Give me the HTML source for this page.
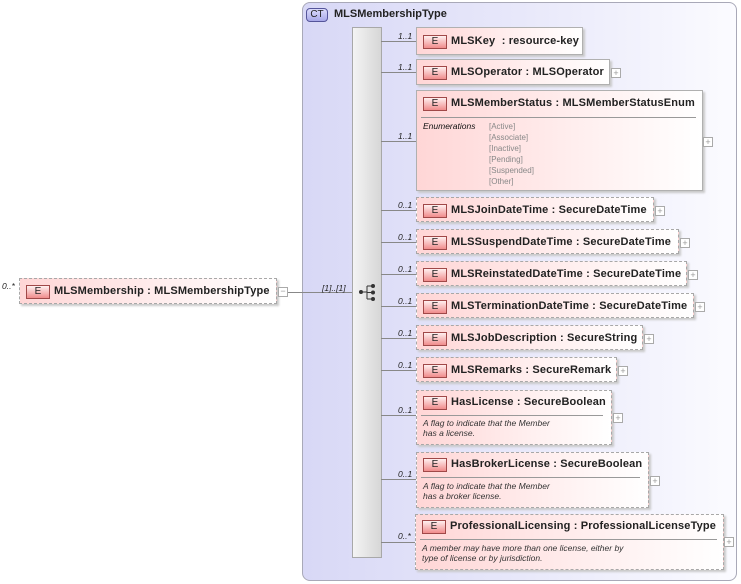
<!DOCTYPE html>
<html><head><meta charset="utf-8"><style>
*{margin:0;padding:0;box-sizing:border-box}
body{width:741px;height:584px;background:#fff;position:relative;font-family:"Liberation Sans",Arial,sans-serif;overflow:hidden}
.abs{position:absolute}
.ct{position:absolute;left:302px;top:2px;width:435px;height:579px;border:1px solid #a9a9b8;border-radius:8px;background:linear-gradient(90deg,#d8d8f6 0%,#e8e8fa 50%,#fbfbff 100%)}
.ctb{position:absolute;left:306px;top:8px;width:22px;height:14px;border:1px solid #55559a;border-radius:4px;background:linear-gradient(#dcdcfc,#a8a8e8);font-size:10px;text-align:center;line-height:12px;color:#222}
.ctt{position:absolute;left:334px;top:8px;font-size:11px;font-weight:bold;color:#222}
.bar{position:absolute;left:352px;top:27px;width:30px;height:531px;border:1px solid #a8a8a8;background:linear-gradient(90deg,#f4f4f4,#d6d6d6)}
.box{position:absolute;border:1px solid #b0b0b0;background:linear-gradient(90deg,#ffd6d6 0%,#fff0f0 60%,#fff 100%);box-shadow:2px 2px 2px #c8c8c8}
.dash{border:1px dashed #a8a8a8}
.e{position:absolute;left:6px;top:6px;width:24px;height:14px;border:1px solid #a04848;background:linear-gradient(#fff0f0,#f08c8c);font-size:10px;text-align:center;line-height:12px;color:#222}
.t{position:absolute;left:34px;top:6px;font-size:11px;font-weight:bold;color:#222;white-space:nowrap;letter-spacing:0.15px}
.hr{position:absolute;left:4px;right:6px;height:1px;background:#999}
.doc{position:absolute;left:6px;font-size:8.5px;font-style:italic;color:#333;line-height:10px;white-space:nowrap}
.pl{position:absolute;width:10px;height:10px;border:1px solid #aaa;background:#fff;font-size:9px;line-height:8px;text-align:center;color:#999}
.ln{position:absolute;height:1px;background:#888}
.c{position:absolute;font-size:8.5px;font-style:italic;color:#222}
</style></head><body>
<div class="ct"></div>
<div class="ctb">CT</div>
<div class="ctt">MLSMembershipType</div>
<div class="bar"></div>
<svg class="abs" style="left:358px;top:283px" width="20" height="20" viewBox="0 0 20 20"><circle cx="3" cy="9" r="2" fill="#333"/><line x1="5" y1="9" x2="9" y2="9" stroke="#333"/><line x1="9" y1="3" x2="9" y2="16" stroke="#333"/><line x1="9" y1="3" x2="14" y2="3" stroke="#333"/><line x1="9" y1="9.5" x2="14" y2="9.5" stroke="#333"/><line x1="9" y1="16" x2="14" y2="16" stroke="#333"/><circle cx="15" cy="3" r="2" fill="#333"/><circle cx="15" cy="9.5" r="2" fill="#333"/><circle cx="15" cy="16" r="2" fill="#333"/></svg>

<div class="c" style="left:2px;top:281px">0..*</div>
<div class="box dash" style="left:19px;top:278px;width:258px;height:26px"><div class="e">E</div><div class="t">MLSMembership : MLSMembershipType</div></div>
<div class="pl" style="left:278px;top:287px;line-height:6px">−</div>
<div class="ln" style="left:288px;top:292px;width:64px"></div>
<div class="c" style="left:322px;top:283px">[1]..[1]</div>

<div class="ln" style="left:381px;top:41px;width:35px"></div><div class="c" style="left:398px;top:31px">1..1</div>
<div class="box" style="left:416px;top:27px;width:167px;height:28px"><div class="e" style="top:7px">E</div><div class="t" style="top:7px">MLSKey&nbsp; : resource-key</div></div>

<div class="ln" style="left:381px;top:72px;width:35px"></div><div class="c" style="left:398px;top:62px">1..1</div>
<div class="box" style="left:416px;top:59px;width:194px;height:26px"><div class="e">E</div><div class="t">MLSOperator : MLSOperator</div></div>
<div class="pl" style="left:611px;top:68px">+</div>

<div class="ln" style="left:381px;top:141px;width:35px"></div><div class="c" style="left:398px;top:131px">1..1</div>
<div class="box" style="left:416px;top:90px;width:287px;height:101px"><div class="e" style="top:6px">E</div><div class="t">MLSMemberStatus : MLSMemberStatusEnum</div><div class="hr" style="top:26px"></div>
<div class="doc" style="top:30px;color:#111">Enumerations</div>
<div class="abs" style="left:72px;top:30px;font-size:8px;color:#888;line-height:11px">[Active]<br>[Associate]<br>[Inactive]<br>[Pending]<br>[Suspended]<br>[Other]</div></div>
<div class="pl" style="left:703px;top:137px">+</div>

<div class="ln" style="left:381px;top:210px;width:35px"></div><div class="c" style="left:398px;top:200px">0..1</div>
<div class="box dash" style="left:416px;top:197px;width:238px;height:25px"><div class="e">E</div><div class="t">MLSJoinDateTime : SecureDateTime</div></div>
<div class="pl" style="left:655px;top:206px">+</div>

<div class="ln" style="left:381px;top:242px;width:35px"></div><div class="c" style="left:398px;top:232px">0..1</div>
<div class="box dash" style="left:416px;top:229px;width:263px;height:25px"><div class="e">E</div><div class="t">MLSSuspendDateTime : SecureDateTime</div></div>
<div class="pl" style="left:680px;top:238px">+</div>

<div class="ln" style="left:381px;top:274px;width:35px"></div><div class="c" style="left:398px;top:264px">0..1</div>
<div class="box dash" style="left:416px;top:261px;width:271px;height:25px"><div class="e">E</div><div class="t">MLSReinstatedDateTime : SecureDateTime</div></div>
<div class="pl" style="left:688px;top:270px">+</div>

<div class="ln" style="left:381px;top:306px;width:35px"></div><div class="c" style="left:398px;top:296px">0..1</div>
<div class="box dash" style="left:416px;top:293px;width:278px;height:25px"><div class="e">E</div><div class="t">MLSTerminationDateTime : SecureDateTime</div></div>
<div class="pl" style="left:695px;top:302px">+</div>

<div class="ln" style="left:381px;top:338px;width:35px"></div><div class="c" style="left:398px;top:328px">0..1</div>
<div class="box dash" style="left:416px;top:325px;width:227px;height:25px"><div class="e">E</div><div class="t">MLSJobDescription : SecureString</div></div>
<div class="pl" style="left:644px;top:334px">+</div>

<div class="ln" style="left:381px;top:370px;width:35px"></div><div class="c" style="left:398px;top:360px">0..1</div>
<div class="box dash" style="left:416px;top:357px;width:201px;height:25px"><div class="e">E</div><div class="t">MLSRemarks : SecureRemark</div></div>
<div class="pl" style="left:618px;top:366px">+</div>

<div class="ln" style="left:381px;top:415px;width:35px"></div><div class="c" style="left:398px;top:405px">0..1</div>
<div class="box dash" style="left:416px;top:390px;width:196px;height:55px"><div class="e" style="top:5px">E</div><div class="t" style="top:5px">HasLicense : SecureBoolean</div><div class="hr" style="top:24px;right:8px"></div><div class="doc" style="top:27px">A flag to indicate that the Member<br>has a license.</div></div>
<div class="pl" style="left:613px;top:413px">+</div>

<div class="ln" style="left:381px;top:479px;width:35px"></div><div class="c" style="left:398px;top:469px">0..1</div>
<div class="box dash" style="left:416px;top:452px;width:233px;height:56px"><div class="e" style="top:5px">E</div><div class="t" style="top:5px">HasBrokerLicense : SecureBoolean</div><div class="hr" style="top:24px;right:8px"></div><div class="doc" style="top:28px">A flag to indicate that the Member<br>has a broker license.</div></div>
<div class="pl" style="left:650px;top:476px">+</div>

<div class="ln" style="left:381px;top:542px;width:34px"></div><div class="c" style="left:398px;top:531px">0..*</div>
<div class="box dash" style="left:415px;top:514px;width:309px;height:56px"><div class="e" style="top:5px">E</div><div class="t" style="top:5px">ProfessionalLicensing : ProfessionalLicenseType</div><div class="hr" style="top:24px"></div><div class="doc" style="top:28px">A member may have more than one license, either by<br>type of license or by jurisdiction.</div></div>
<div class="pl" style="left:724px;top:537px">+</div>
</body></html>
